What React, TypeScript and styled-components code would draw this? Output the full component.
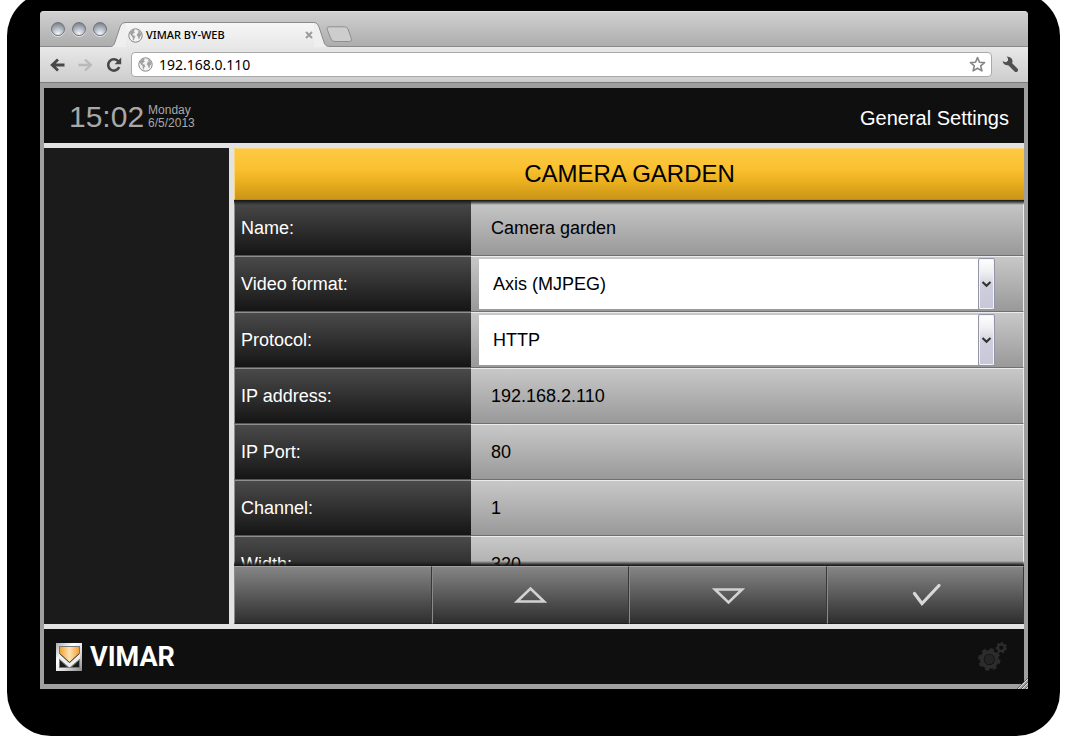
import React from "react";
import styled, { createGlobalStyle, css } from "styled-components";

const sans = `"Liberation Sans", Arial, sans-serif`;
const chromeSans = `"Noto Sans", "Open Sans", sans-serif`;

const GlobalStyle = createGlobalStyle`
  * { box-sizing: border-box; }
  body { margin: 0; background: #fff; overflow: hidden; font-family: ${sans}; }
  button, input, select { font: inherit; color: inherit; margin: 0; }
  button { padding: 0; border: 0; background: none; cursor: pointer; }
  svg { display: block; flex: none; }
`;

const Backdrop = styled.div`
  margin: -8px 8px 0 7px;
  padding: 19px 32px 47px 33px;
  border-radius: 44px;
  background: #000;
`;

const BrowserWindow = styled.section`
  position: relative;
  border-radius: 4px 4px 0 0;
  overflow: hidden;
  background: #9f9f9e;
`;

/* ---------- browser chrome ---------- */

const TabStrip = styled.div`
  display: flex;
  align-items: flex-end;
  height: 36px;
  padding-left: 11px;
  border-top: 1px solid #dedede;
  border-bottom: 1px solid #8a8a8a;
  background: linear-gradient(#d0d0d0, #adadad);
`;

const WindowButtons = styled.div`
  display: flex;
  gap: 7px;
  align-self: flex-start;
  padding-top: 10px;
`;

const WindowButton = styled.button`
  width: 14px;
  height: 14px;
  border: 1px solid #6f7580;
  border-radius: 50%;
  background: radial-gradient(circle at 50% 90%, #f4f6f8 0, #c3c9d0 35%, #8b929c 75%, #697079 100%);
  box-shadow: 0 1px 0 #e4e4e4;
`;

const Tab = styled.div`
  display: flex;
  margin: 0 0 -1px 3px;
`;

const TabFace = styled.div`
  display: flex;
  align-items: center;
  gap: 3px;
  width: 188px;
  height: 25px;
  padding-left: 2px;
  border-top: 1px solid #8a8a8a;
  background: linear-gradient(#f6f6f6, #e8e8e8);
  font: 500 11px/16px ${chromeSans};
  color: #000;
`;

const TabTitle = styled.span`
  flex: 1;
  white-space: nowrap;
`;

const NewTab = styled.button`
  margin: 0 0 3px -4px;
`;

const Toolbar = styled.div`
  display: flex;
  align-items: center;
  height: 36px;
  padding: 0 9px 0 10px;
  border-bottom: 1px solid #7c7c7c;
  background: linear-gradient(#e8e8e8, #cdcdcd);
`;

const NavButtons = styled.div`
  display: flex;
  gap: 13px;
  margin-right: 9px;
`;

const AddressBar = styled.div`
  display: flex;
  flex: 1;
  align-items: center;
  height: 25px;
  margin-right: 10px;
  padding: 0 5px 0 6px;
  border: 1px solid #a9a9a9;
  border-radius: 4px;
  background: #fff;
`;

const AddressInput = styled.input`
  flex: 1;
  min-width: 0;
  padding: 0 0 0 6px;
  border: 0;
  outline: 0;
  background: none;
  font: 14px/20px ${chromeSans};
  color: #000;
`;

const ResizeGrip = styled.svg`
  position: absolute;
  right: 0;
  bottom: 0;
`;

/* ---------- application ---------- */

const Application = styled.main`
  display: flex;
  flex-direction: column;
  gap: 5px;
  margin: 5px 4px;
  background: #e3e3e3;
`;

const bar = css`
  display: flex;
  align-items: center;
  justify-content: space-between;
  height: 55px;
  background: #0f0f0f;
`;

const AppHeader = styled.header`
  ${bar}
  padding: 2px 15px 0 25px;
`;

const Clock = styled.div`
  display: flex;
  align-items: center;
  gap: 4px;
  color: #a8a8a8;
`;

const Time = styled.time`
  font-size: 30px;
  line-height: 34px;
`;

const DateText = styled.div`
  font-size: 12px;
  line-height: 13px;
`;

const SectionName = styled.h1`
  margin: 0;
  padding-top: 2px;
  color: #fff;
  font-size: 20px;
  font-weight: 400;
  line-height: 24px;
`;

const Body = styled.div`
  display: flex;
  gap: 5px;
`;

const Sidebar = styled.aside`
  flex: 0 0 185px;
  background: #1b1b1b;
`;

const Panel = styled.form`
  flex: 1;
  min-width: 0;
  margin: 0;
`;

const PanelTitle = styled.h2`
  margin: 0;
  height: 52px;
  border: 1px solid #fbd578;
  border-width: 1px 0 0 1px;
  border-bottom: 1px solid #b88c16;
  background: linear-gradient(#fdc943, #fac030 40%, #eab01f 65%, #cb9618);
  color: #000;
  font-size: 24px;
  font-weight: 400;
  line-height: 50px;
  text-align: center;
`;

const SettingsView = styled.div`
  position: relative;
  height: calc(100vh - 374px);
  min-height: 168px;
  overflow: hidden;

  &::before,
  &::after {
    content: "";
    position: absolute;
    left: 0;
    right: 0;
    height: 5px;
    pointer-events: none;
  }
  &::before {
    top: 0;
    background: linear-gradient(#101010, rgba(30, 30, 30, 0.75) 40%, rgba(40, 40, 40, 0));
  }
  &::after {
    bottom: 0;
    background: linear-gradient(rgba(40, 40, 40, 0), rgba(30, 30, 30, 0.75) 60%, #101010);
  }
`;

const SettingRow = styled.div`
  display: grid;
  grid-template-columns: 30% 70%;
  height: 56px;
`;

const SettingLabel = styled.label`
  padding-left: 6px;
  border: solid #8e8f8e;
  border-width: 1px 0 0 1px;
  border-bottom: 1px solid #555;
  background: linear-gradient(#4a4a4a, #151515);
  color: #fff;
  font-size: 18px;
  line-height: 54px;
`;

const SettingValue = styled.div`
  display: flex;
  align-items: center;
  padding: 0 28px 0 8px;
  border: solid #ececec;
  border-width: 1px 1px 0 0;
  border-bottom: 1px solid #707070;
  background: linear-gradient(#c8c8c8, #999);
  color: #000;
  font-size: 18px;
`;

const TextField = styled.input`
  width: 100%;
  height: 54px;
  padding: 0 12px;
  border: 0;
  outline: 0;
  background: none;
`;

const SelectFrame = styled.div`
  position: relative;
  width: 100%;
`;

const SelectField = styled.select`
  display: block;
  width: 100%;
  height: 50px;
  padding: 0 24px 0 14px;
  border: 0;
  border-radius: 0;
  outline: 0;
  appearance: none;
  background: #fff;
`;

const SelectArrow = styled.span`
  position: absolute;
  top: -1px;
  right: 0;
  display: grid;
  place-items: center;
  width: 17px;
  height: 52px;
  border: 1px solid #9394a6;
  border-radius: 2px;
  background: linear-gradient(#fff, #f0f0f2 25%, #cfcedd 55%, #c8c7d9);
  box-shadow: inset 0 0 0 1px #f3f3fa;
  pointer-events: none;
`;

const Commands = styled.div`
  display: grid;
  grid-template-columns: repeat(4, 1fr);
`;

const Command = styled.button`
  display: grid;
  place-items: center;
  height: 58px;
  border: 1px solid;
  border-color: #a3a3a3 #383838 #202020 #8a8a8a;
  background: linear-gradient(#858585, #2e2e2e);
`;

const AppFooter = styled.footer`
  ${bar}
  padding: 0 17px 0 12px;
`;

const Brand = styled.div`
  display: flex;
  align-items: center;
  gap: 7px;
  color: #fff;
  font: 700 27px/32px Roboto, ${sans};
`;

/* ---------- drawings ---------- */

const Globe = () => (
  <svg width="15" height="15" viewBox="0 0 15 15" aria-hidden="true">
    <circle cx="7.5" cy="7.5" r="6.7" fill="#f3f3f3" stroke="#858585" />
    <path
      d="M1.8 5 3 3 5.4 1.8 6.8 2.2 5.8 3.4 7 4.4 5.4 5.6 4.4 7 6.4 7.6 7.4 9 6.2 10.6 6 12.8 4.8 11.4 4.6 9 3 7.6ZM9.6 2 12 3.6 13.4 6.4 13 8.4 12 8 11.8 10.6 10.6 11 10 8.8 8.8 7.4 9.4 5.4 10.6 4.4Z"
      fill="#a2a2a2"
    />
  </svg>
);

const Arrow = ({ back }: { back?: boolean }) => (
  <svg width="15" height="14" viewBox="0 0 15 14" aria-hidden="true">
    <path
      d={back ? "M8 1.5 2.2 7 8 12.5M2.8 7H14.5" : "M7 1.5 12.8 7 7 12.5M12.2 7H.5"}
      fill="none"
      stroke={back ? "#484848" : "#b9b9b9"}
      strokeWidth={back ? 2.8 : 2.3}
    />
  </svg>
);

const Reload = () => (
  <svg width="16" height="16" viewBox="0 0 16 16" aria-hidden="true">
    <path d="M12.4 4.4A5.7 5.7 0 1 0 13.2 10" fill="none" stroke="#484848" strokeWidth="2.6" />
    <path d="M15.2 .6V7.2H8.6Z" fill="#484848" />
  </svg>
);

const Star = () => (
  <svg width="17" height="17" viewBox="0 0 17 17" aria-hidden="true">
    <path
      d="M8.5 1.6 10.5 6.2 15.5 6.6 11.7 9.8 12.9 14.9 8.5 12.2 4.1 14.9 5.3 9.8 1.5 6.6 6.5 6.2Z"
      fill="#fff"
      stroke="#858585"
      strokeWidth="1.6"
      strokeLinejoin="round"
    />
  </svg>
);

const Wrench = () => (
  <svg width="17" height="17" viewBox="0 0 17 17" aria-hidden="true">
    <path d="M7 7 14 14" stroke="#505050" strokeWidth="4" strokeLinecap="round" />
    <path d="M4.6.6 6 .8Q10.4 1.6 10.6 5.4 9.8 9.6 5.6 9.3 1 8.8.6 5.2L4 6.2 6 4.8 6 2.6Z" fill="#505050" />
  </svg>
);

const VimarMark = () => (
  <svg width="27" height="28" viewBox="0 0 27 28" aria-hidden="true">
    <defs>
      <linearGradient id="metal" x1="0" y1="0" x2="1" y2="1">
        <stop offset="0" stopColor="#aaa" />
        <stop offset=".35" stopColor="#fff" />
        <stop offset=".65" stopColor="#d8d8d8" />
        <stop offset="1" stopColor="#888" />
      </linearGradient>
      <linearGradient id="amber">
        <stop offset="0" stopColor="#f2a336" />
        <stop offset=".5" stopColor="#fde3b4" />
        <stop offset="1" stopColor="#f0a23a" />
      </linearGradient>
    </defs>
    <path d="M0 0H26V28H0Z" fill="url(#metal)" />
    <path d="M3 3H24V25H3Z" fill="#77787c" />
    <path d="M3 10 13.5 20 24 10V15.500L13.5 24.500 3 15.500Z" fill="#eee" />
    <path d="M4 17.500 11 24H4ZM23 17.500 16 24H23Z" fill="#1b1b1b" />
    <path d="M4 4H23V10.500L13.500 19 4 10.500Z" fill="url(#amber)" />
    <path d="M3.500 10.500 13.500 19.500 23.500 10.500" fill="none" stroke="#4b3a27" />
  </svg>
);

const Gears = () => (
  <svg width="29" height="29" viewBox="0 0 29 29" fill="none" aria-hidden="true">
    <g stroke="#2c2c2c">
      <circle cx="11.300" cy="17.500" r="7.500" strokeWidth="4" />
      <circle cx="11.300" cy="17.500" r="10" strokeWidth="2.600" strokeDasharray="4.200 3.654" />
      <circle cx="23.300" cy="5.700" r="3.300" strokeWidth="2.400" />
      <circle cx="23.300" cy="5.700" r="4.800" strokeWidth="1.600" strokeDasharray="2.400 1.908" />
    </g>
    <circle cx="11.300" cy="17.500" r="4.800" fill="#242424" />
  </svg>
);

const Triangle = ({ down }: { down?: boolean }) => (
  <svg width="34" height="20" viewBox="0 0 34 20" aria-hidden="true">
    <path
      d={down ? "M4 4.500H31L17.500 17.500Z" : "M4 16.500H31L17.500 3.500Z"}
      fill="none"
      stroke="#d2d2d2"
      strokeWidth="2.600"
    />
  </svg>
);

const Check = () => (
  <svg width="32" height="24" viewBox="0 0 32 24" aria-hidden="true">
    <path d="M5.500 10.500 13 20.500 30 2.500" fill="none" stroke="#d8d8d8" strokeWidth="3.200" strokeLinecap="round" />
  </svg>
);

/* ---------- data ---------- */

type Setting = { id: string; label: string; value: string; options?: string[] };

const settings: Setting[] = [
  { id: "name", label: "Name:", value: "Camera garden" },
  { id: "format", label: "Video format:", value: "Axis (MJPEG)", options: ["Axis (MJPEG)"] },
  { id: "protocol", label: "Protocol:", value: "HTTP", options: ["HTTP"] },
  { id: "address", label: "IP address:", value: "192.168.2.110" },
  { id: "port", label: "IP Port:", value: "80" },
  { id: "channel", label: "Channel:", value: "1" },
  { id: "width", label: "Width:", value: "320" },
];

export default function App() {
  return (
    <>
      <GlobalStyle />
      <Backdrop>
        <BrowserWindow>
          <TabStrip>
            <WindowButtons>
              <WindowButton aria-label="Close window" />
              <WindowButton aria-label="Minimize window" />
              <WindowButton aria-label="Zoom window" />
            </WindowButtons>
            <Tab>
              <svg width="16" height="25" viewBox="0 0 16 25" aria-hidden="true">
                <path d="M0 25V24.500C3 24.500 4 23 5 20L10 5C11 2 12.500.5 16 .5V25Z" fill="#efefef" />
                <path d="M0 24.500C3 24.500 4 23 5 20L10 5C11 2 12.500.5 16 .5" fill="none" stroke="#8a8a8a" />
              </svg>
              <TabFace>
                <Globe />
                <TabTitle>VIMAR BY-WEB</TabTitle>
                <button aria-label="Close tab">
                  <svg width="10" height="10" viewBox="0 0 10 10" aria-hidden="true">
                    <path d="M2 2 8 8M8 2 2 8" stroke="#9c9c9c" strokeWidth="2" />
                  </svg>
                </button>
              </TabFace>
              <svg width="16" height="25" viewBox="0 0 16 25" aria-hidden="true">
                <path d="M0 .5C2 .5 4 2 5 5L10 20C11 23 12 24.500 16 24.500V25H0Z" fill="#efefef" />
                <path d="M0 .5C2 .5 4 2 5 5L10 20C11 23 12 24.500 16 24.500" fill="none" stroke="#8a8a8a" />
              </svg>
            </Tab>
            <NewTab aria-label="New tab">
              <svg width="27" height="17" viewBox="0 0 27 17" aria-hidden="true">
                <path
                  d="M3 .8H18.500Q21 .8 22 3L25.500 13Q26 15.500 23.500 15.500H9Q6 15.500 5 13L1 3Q.5 .8 3 .8Z"
                  fill="#cdcdcd"
                  stroke="#8f8f8f"
                />
              </svg>
            </NewTab>
          </TabStrip>
          <Toolbar>
            <NavButtons>
              <button aria-label="Back"><Arrow back /></button>
              <button aria-label="Forward"><Arrow /></button>
              <button aria-label="Reload"><Reload /></button>
            </NavButtons>
            <AddressBar>
              <Globe />
              <AddressInput aria-label="Address" defaultValue="192.168.0.110" />
              <button aria-label="Bookmark"><Star /></button>
            </AddressBar>
            <button aria-label="Tools"><Wrench /></button>
          </Toolbar>

          <Application>
            <AppHeader>
              <Clock>
                <Time>15:02</Time>
                <DateText>
                  <div>Monday</div>
                  <div>6/5/2013</div>
                </DateText>
              </Clock>
              <SectionName>General Settings</SectionName>
            </AppHeader>

            <Body>
              <Sidebar />
              <Panel onSubmit={(event) => event.preventDefault()}>
                <PanelTitle>CAMERA GARDEN</PanelTitle>
                <SettingsView>
                  {settings.map(({ id, label, value, options }) => (
                    <SettingRow key={id}>
                      <SettingLabel htmlFor={id}>{label}</SettingLabel>
                      <SettingValue>
                        {options ? (
                          <SelectFrame>
                            <SelectField id={id} defaultValue={value}>
                              {options.map((option) => (
                                <option key={option}>{option}</option>
                              ))}
                            </SelectField>
                            <SelectArrow>
                              <svg width="11" height="8" viewBox="0 0 11 8" aria-hidden="true">
                                <path d="M1.500 2 5.500 5.800 9.500 2" fill="none" stroke="#333" strokeWidth="2.200" />
                              </svg>
                            </SelectArrow>
                          </SelectFrame>
                        ) : (
                          <TextField id={id} defaultValue={value} />
                        )}
                      </SettingValue>
                    </SettingRow>
                  ))}
                </SettingsView>
                <Commands>
                  <Command type="button" aria-label="Empty" />
                  <Command type="button" aria-label="Scroll up"><Triangle /></Command>
                  <Command type="button" aria-label="Scroll down"><Triangle down /></Command>
                  <Command type="submit" aria-label="Confirm"><Check /></Command>
                </Commands>
              </Panel>
            </Body>

            <AppFooter>
              <Brand>
                <VimarMark />
                <span>VIMAR</span>
              </Brand>
              <button aria-label="Settings"><Gears /></button>
            </AppFooter>
          </Application>

          <ResizeGrip width="12" height="12" viewBox="0 0 12 12" aria-hidden="true">
            <path d="M1 12 12 1M5 12 12 5M9 12 12 9" stroke="#5c5c5c" />
            <path d="M2 12 12 2M6 12 12 6M10 12 12 10" stroke="#dcdcdc" />
          </ResizeGrip>
        </BrowserWindow>
      </Backdrop>
    </>
  );
}
